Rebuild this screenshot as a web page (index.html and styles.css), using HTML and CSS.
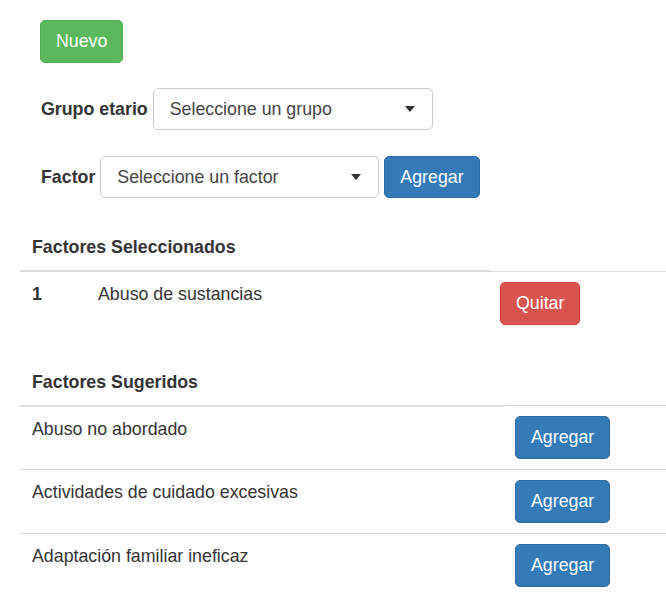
FILE: index.html
```html
<!DOCTYPE html>
<html lang="es">
<head>
  <meta charset="UTF-8" />
  <meta name="viewport" content="width=device-width, initial-scale=1.0" />
  <title>Factores de riesgo</title>
  <link rel="stylesheet" href="styles.css">
</head>
<body>
  <div class="page">
    <div class="toolbar">
      <button type="button" class="btn btn-success">Nuevo</button>
    </div>

    <div class="field">
      <label>Grupo etario</label>
      <div class="picker picker-grupo">
        <span class="picker-text">Seleccione un grupo</span>
        <span class="picker-arrow"></span>
      </div>
    </div>

    <div class="field">
      <label>Factor</label>
      <div class="picker picker-factor">
        <span class="picker-text">Seleccione un factor</span>
        <span class="picker-arrow"></span>
      </div>
      <button type="button" class="btn btn-primary">Agregar</button>
    </div>

    <table class="table table-selected">
      <colgroup>
        <col class="c-num"><col class="c-name"><col>
      </colgroup>
      <thead>
        <tr><th colspan="2">Factores Seleccionados</th></tr>
      </thead>
      <tbody>
        <tr>
          <th>1</th>
          <td>Abuso de sustancias</td>
          <td><button type="button" class="btn btn-danger">Quitar</button></td>
        </tr>
      </tbody>
    </table>

    <table class="table table-suggested">
      <colgroup>
        <col class="c-factor"><col>
      </colgroup>
      <thead>
        <tr><th>Factores Sugeridos</th></tr>
      </thead>
      <tbody>
        <tr>
          <td>Abuso no abordado</td>
          <td><button type="button" class="btn btn-primary">Agregar</button></td>
        </tr>
        <tr>
          <td>Actividades de cuidado excesivas</td>
          <td><button type="button" class="btn btn-primary">Agregar</button></td>
        </tr>
        <tr>
          <td>Adaptación familiar ineficaz</td>
          <td><button type="button" class="btn btn-primary">Agregar</button></td>
        </tr>
      </tbody>
    </table>
  </div>
</body>
</html>
```

FILE: styles.css
```css
html, body { margin: 0; padding: 0; overflow: hidden; }
body { font-family: "Liberation Sans", Arial, Helvetica, sans-serif; font-size: 17.8px; line-height: 25px; color: #333; background: #fff; }

.page { padding: 20px 0 0 20px; }
.toolbar { padding-left: 20px; margin-bottom: 25px; }

/* buttons */
.btn { display: inline-block; font-family: inherit; font-size: 17.8px; line-height: 25px; padding: 8px 15px; border: 1px solid transparent; border-radius: 5px; color: #fff; cursor: pointer; white-space: nowrap; margin: 0; }
.btn-success { background: #5cb85c; border-color: #4cae4c; }
.btn-primary { background: #337ab7; border-color: #2e6da4; }
.btn-danger { background: #d9534f; border-color: #d43f3a; }

/* label + dropdown rows */
.field { display: flex; align-items: center; gap: 5px; padding-left: 21px; margin-bottom: 26px; }
.field label { font-weight: bold; }
.field .btn { padding: 7.5px 15px; }
.picker { box-sizing: border-box; height: 42px; display: flex; align-items: center; justify-content: space-between; padding: 0 17px 0 16px; border: 1px solid #ccc; border-radius: 5px; background: #fff; color: #444; }
.picker-grupo { width: 280px; }
.picker-factor { width: 279px; }
.picker-arrow { width: 0; height: 0; border-style: solid; border-width: 6px 5px 0 5px; border-color: #333 transparent transparent transparent; }

/* tables */
.table { width: 100%; border-collapse: collapse; border-spacing: 0; table-layout: fixed; margin-bottom: 24px; }
.table th, .table td { padding: 10px; text-align: left; vertical-align: top; }
.table tr > :first-child { padding-left: 12px; }
.table thead th { font-weight: bold; padding-top: 11px; border-bottom: 2px solid #ddd; }
.table tbody th, .table tbody td { border-top: 1px solid #ddd; }
.table-suggested { margin-bottom: 0; }
.c-num { width: 68px; }
.c-name { width: 402px; }
.c-factor { width: 485px; }
```
